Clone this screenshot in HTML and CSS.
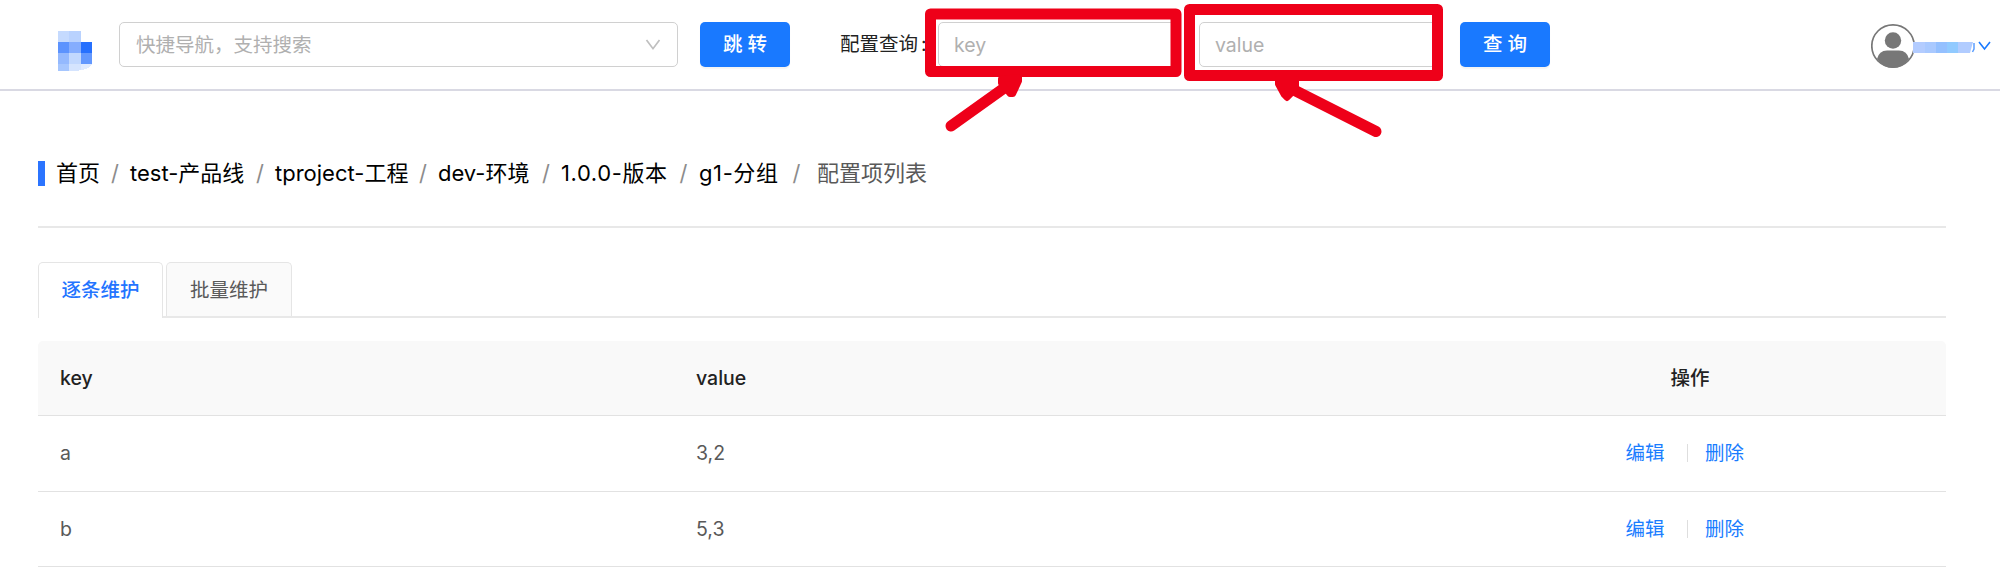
FILE: index.html
```html
<!DOCTYPE html>
<html lang="zh-CN">
<head>
<meta charset="utf-8">
<title>配置项列表</title>
<link rel="stylesheet" href="styles.css">
</head>
<body>
<header class="topbar">
  <svg class="logo" width="34" height="40" viewBox="0 0 34 40" shape-rendering="crispEdges">
    <path fill="#c5dafe" d="M0 0h11v11H0z"/><path fill="#b9d2fe" d="M11 0h12v11H11z"/>
    <path fill="#5c93fe" d="M0 11h11v11H0z"/><path fill="#85adfe" d="M11 11h12v11H11z"/><path fill="#2670fe" d="M23 11h11v11H23z"/>
    <path fill="#94b9fe" d="M0 22h11v11H0z"/><path fill="#c2d8fe" d="M11 22h12v11H11z"/><path fill="#6398fe" d="M23 22h11v11H23z"/>
    <path fill="#a6c6fe" d="M0 33h11v7H0z"/><path fill="#d5e4fe" d="M11 33h12v6l-5 1h-7z"/><path fill="#e0ebff" d="M23 33h11q-2 5-11 6z"/>
  </svg>
  <div class="field nav-select">
    <span>快捷导航，支持搜索</span>
    <svg width="16" height="12" viewBox="0 0 16 12" fill="none" stroke="#bfbfbf" stroke-width="1.7"><path d="M1.5 1 8 9.7 14.500 1"/></svg>
  </div>
  <button class="btn">跳 转</button>
  <label class="query-label">配置查询<span>:</span></label>
  <div class="field key-field">key</div>
  <div class="field value-field">value</div>
  <button class="btn query-btn">查 询</button>
  <div class="user">
    <svg width="44" height="46" viewBox="0 0 44 46">
      <circle cx="22" cy="23" r="21.200" fill="#fff" stroke="#777" stroke-width="1.700"/>
      <circle cx="22" cy="17.500" r="8.200" fill="#777"/>
      <path fill="#777" d="M6 36Q8 27.500 16 27.500H28Q36 27.500 38 36Q32 45 22 45T6 36z"/>
    </svg>
    <svg class="user-name" width="62" height="11" viewBox="0 0 62 11">
      <path fill="#b3ccff" d="M0 0h12v11H0z"/><path fill="#a9c9ff" d="M12 0h11v11H12z"/><path fill="#94c0ff" d="M23 0h11v11H23z"/><path fill="#91caff" d="M34 0h11v11H34z"/><path fill="#b1ccff" d="M45 0h15l-3 11H45z"/><path d="M61 1v6l-1.500 3" fill="none" stroke="#5c9fff" stroke-width="1.500"/>
    </svg>
    <svg width="13" height="10" viewBox="0 0 13 10" fill="none" stroke="#1a7aff" stroke-width="1.600"><path d="M1 1 6.500 8 12 1"/></svg>
  </div>
</header>
<main class="content">
  <nav class="crumbs">
    <span class="crumb c1">首页<i>/</i></span>
    <span class="crumb c2">test-产品线<i>/</i></span>
    <span class="crumb c3">tproject-工程<i>/</i></span>
    <span class="crumb c4">dev-环境<i>/</i></span>
    <span class="crumb c5">1.0.0-版本<i>/</i></span>
    <span class="crumb c6">g1-分组<i>/</i></span>
    <span class="current">配置项列表</span>
  </nav>
  <div class="tabs">
    <div class="tab active">逐条维护</div>
    <div class="tab">批量维护</div>
  </div>
  <div class="table">
    <div class="row head"><span>key</span><span>value</span><span class="center">操作</span></div>
    <div class="row"><span>a</span><span>3,2</span><span class="actions"><a>编辑</a><b></b><a>删除</a></span></div>
    <div class="row"><span>b</span><span>5,3</span><span class="actions"><a>编辑</a><b></b><a>删除</a></span></div>
  </div>
</main>
<svg class="marks" width="540" height="150" viewBox="920 0 540 150" fill="none" stroke="#ee0019" stroke-width="11" stroke-linejoin="round" stroke-linecap="round">
  <rect x="930.500" y="14" width="245.500" height="57.500"/>
  <rect x="1189.500" y="9.500" width="248" height="66"/>
  <path d="M951 126 1007 86"/>
  <path d="M1376 131.500 1288 87"/>
  <path fill="#ee0019" stroke-width="6" d="M1001 79 1019 77V81L1013 94H1010L1001 83z"/>
  <path fill="#ee0019" stroke-width="6" d="M1278 79H1296V87L1290 95 1287 98 1284 95 1278 84z"/>
</svg>
</body>
</html>
```
FILE: styles.css
```css
* { box-sizing: border-box; }
body {
  margin: 0;
  height: 572px;
  overflow: hidden;
  background: #fff;
  color: #595959;
  font: 19.5px/30px Inter, "Noto Sans CJK SC", sans-serif;
}
.topbar {
  display: flex;
  align-items: flex-start;
  height: 91px;
  padding: 22px 9px 0 58px;
  border-bottom: 2px solid #d9d9e3;
}
.logo { flex: none; margin: 9px 27px 0 0; }
.field {
  display: flex;
  align-items: center;
  flex: none;
  height: 45px;
  padding: 0 16px;
  border: 1.500px solid #d0d0d0;
  border-radius: 5px;
  color: #b0b0b0;
}
.nav-select { width: 559px; justify-content: space-between; }
.btn {
  flex: none;
  width: 90px;
  height: 45px;
  margin-left: 22px;
  padding: 0;
  border: 0;
  border-radius: 5px;
  background: #1979ff;
  box-shadow: 0 2px 1px #0000000b;
  color: #fff;
  font: 500 19.5px/45px Inter, "Noto Sans CJK SC", sans-serif;
}
.query-label { flex: none; width: 98px; margin-left: 50px; line-height: 45px; color: #222; white-space: nowrap; }
.query-label span { margin-left: 3px; }
.key-field { width: 240px; padding-left: 15px; }
.value-field { width: 240px; margin-left: 21px; padding-left: 15px; }
.query-btn { margin-left: 21px; }
.user { display: flex; align-items: center; margin: 1px 0 0 auto; }
.user-name { margin: 3px 3px 0 -2px; }

.content { padding: 0 54px 0 38px; }
.crumbs {
  display: flex;
  align-items: center;
  height: 137px;
  padding-top: 29px;
  border-bottom: 2px solid #e8e8e8;
  font-size: 22px;
  color: #595959;
  white-space: nowrap;
}
.crumbs::before { content: ""; width: 7px; height: 25px; margin-right: 11px; background: #2b74ff; }
.crumb { display: flex; justify-content: space-between; flex: none; padding-right: 11px; color: #000; }
.crumb i { font-style: normal; color: #8c8c8c; }
.c1 { width: 74px; }
.c2 { width: 145px; }
.c3 { width: 163px; }
.c4 { width: 123px; }
.c5 { width: 138px; letter-spacing: 0.6px; }
.c6 { width: 118px; padding-right: 16px; letter-spacing: 0.6px; }

.tabs { display: flex; gap: 3px; height: 56px; margin-top: 34px; border-bottom: 2px solid #e8e8e8; }
.tab {
  width: 126px;
  height: 54px;
  border: 1.500px solid #e5e5e5;
  border-bottom: 0;
  border-radius: 5px 5px 0 0;
  background: #fafafa;
  text-align: center;
  line-height: 54px;
}
.tab.active { width: 125px; height: 56px; background: #fff; color: #2374ff; font-weight: 500; }

.table { margin-top: 23px; }
.row {
  display: grid;
  grid-template-columns: 636px 1fr 512px;
  align-items: center;
  height: 75.500px;
  padding-left: 22px;
  border-bottom: 1.500px solid #e2e2e2;
}
.head { height: 75px; background: #f9f9f9; border-radius: 5px 5px 0 0; color: #222; font-weight: 500; }
.center { text-align: center; }
.actions { display: flex; align-items: center; padding-left: 191.500px; }
.actions a { color: #1a7dff; }
.actions b { width: 1px; height: 18px; margin: 0 17.500px 0 22px; background: #dedede; }

.marks { position: absolute; left: 920px; top: 0; }
```
